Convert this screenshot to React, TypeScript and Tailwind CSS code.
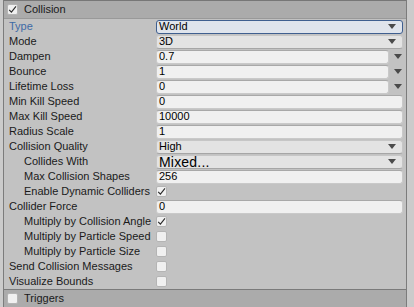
import React from "react";

const Arrow = () => (
  <svg width="8" height="5" viewBox="0 0 8 5" className="shrink-0">
    <path d="M0 0 L8 0 L4 5 Z" fill="#4a4a4a" />
  </svg>
);

const Check = () => (
  <svg width="9" height="9" viewBox="0 0 9 9">
    <path d="M1.2 4.8 L3.4 7.2 L8 1.4" fill="none" stroke="#2a2a2a" strokeWidth="1.1" />
  </svg>
);

const CheckBox = ({ checked }: { checked?: boolean }) => (
  <div className="w-[11px] h-[11px] rounded-[2px] bg-[#f0f0f0] border border-[#b4b4b4] flex items-center justify-center">
    {checked ? <Check /> : null}
  </div>
);

const Label = ({ text, indent, blue }: { text: string; indent?: boolean; blue?: boolean }) => (
  <div
    className={
      "w-[152px] shrink-0 whitespace-nowrap " +
      (indent ? "pl-[20px] " : "pl-[5px] ") +
      (blue ? "text-[#3d6aa6]" : "text-[#1a1a1a]")
    }
  >
    {text}
  </div>
);

const Dropdown = ({ value, active, big }: { value: string; active?: boolean; big?: boolean }) => (
  <div
    className={
      "flex-1 mr-[3px] h-[14px] rounded-[3px] flex items-center justify-between pl-[2px] pr-[6px] " +
      (active
        ? "bg-[#dfe4ec] border border-[#3f5f8f]"
        : "bg-[#e3e3e3] border border-[#c6c6c6] border-b-[#a6a6a6]")
    }
  >
    <span className={big ? "text-[14px] leading-[14px] tracking-[0.2px]" : ""}>{value}</span>
    <Arrow />
  </div>
);

const TextField = ({ value, curve }: { value: string; curve?: boolean }) => (
  <div className="flex-1 flex items-center">
    <div
      className={
        "flex-1 h-[14px] rounded-[3px] bg-[#f0f0f0] border border-[#c9c9c9] border-t-[#a8a8a8] flex items-center pl-[2px] " +
        (curve ? "" : "mr-[3px]")
      }
    >
      {value}
    </div>
    {curve ? (
      <div className="w-[17px] flex items-center justify-center">
        <Arrow />
      </div>
    ) : null}
  </div>
);

const Row = ({ children }: { children: React.ReactNode }) => (
  <div className="h-[15px] flex items-center">{children}</div>
);

export default function App() {
  return (
    <div
      className="w-[414px] h-[307px] flex bg-[#c8c8c8] text-[11px] leading-[13px] overflow-hidden"
      style={{ fontFamily: "'Liberation Sans', Arial, sans-serif" }}
    >
      <div className="w-[3px] shrink-0 bg-[#cbcbcb]" />
      <div className="w-[404px] shrink-0 flex flex-col bg-[#c2c2c2] border-l border-r border-[#7c7c7c]">
        <div className="h-[19px] shrink-0 flex items-center bg-[#ababab] border-t border-[#777777] border-b border-b-[#999999] pl-[3px]">
          <CheckBox checked />
          <span className="ml-[6px] text-[#1a1a1a]">Collision</span>
        </div>
        <div className="flex flex-col flex-1">
          <Row>
            <Label text="Type" blue />
            <Dropdown value="World" active />
          </Row>
          <Row>
            <Label text="Mode" />
            <Dropdown value="3D" />
          </Row>
          <Row>
            <Label text="Dampen" />
            <TextField value="0.7" curve />
          </Row>
          <Row>
            <Label text="Bounce" />
            <TextField value="1" curve />
          </Row>
          <Row>
            <Label text="Lifetime Loss" />
            <TextField value="0" curve />
          </Row>
          <Row>
            <Label text="Min Kill Speed" />
            <TextField value="0" />
          </Row>
          <Row>
            <Label text="Max Kill Speed" />
            <TextField value="10000" />
          </Row>
          <Row>
            <Label text="Radius Scale" />
            <TextField value="1" />
          </Row>
          <Row>
            <Label text="Collision Quality" />
            <Dropdown value="High" />
          </Row>
          <Row>
            <Label text="Collides With" indent />
            <Dropdown value="Mixed..." big />
          </Row>
          <Row>
            <Label text="Max Collision Shapes" indent />
            <TextField value="256" />
          </Row>
          <Row>
            <Label text="Enable Dynamic Colliders" indent />
            <CheckBox checked />
          </Row>
          <Row>
            <Label text="Collider Force" />
            <TextField value="0" />
          </Row>
          <Row>
            <Label text="Multiply by Collision Angle" indent />
            <CheckBox checked />
          </Row>
          <Row>
            <Label text="Multiply by Particle Speed" indent />
            <CheckBox />
          </Row>
          <Row>
            <Label text="Multiply by Particle Size" indent />
            <CheckBox />
          </Row>
          <Row>
            <Label text="Send Collision Messages" />
            <CheckBox />
          </Row>
          <Row>
            <Label text="Visualize Bounds" />
            <CheckBox />
          </Row>
        </div>
        <div className="h-[18px] shrink-0 flex items-center bg-[#ababab] border-t border-[#7a7a7a] pl-[3px]">
          <CheckBox />
          <span className="ml-[6px] text-[#1a1a1a]">Triggers</span>
        </div>
      </div>
      <div className="flex-1 bg-[#cbcbcb]" />
    </div>
  );
}
